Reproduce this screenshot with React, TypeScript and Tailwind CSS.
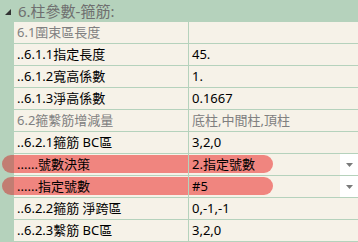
import React from "react";

type Row = { l: string; r: string; group?: boolean; pill?: boolean; drop?: boolean };

const rows: Row[] = [
  { l: "6.1圍束區長度", r: "", group: true },
  { l: "..6.1.1指定長度", r: "45." },
  { l: "..6.1.2寬高係數", r: "1." },
  { l: "..6.1.3淨高係數", r: "0.1667" },
  { l: "6.2箍繫筋增減量", r: "底柱,中間柱,頂柱", group: true },
  { l: "..6.2.1箍筋 BC區", r: "3,2,0" },
  { l: "......號數決策", r: "2.指定號數", pill: true, drop: true },
  { l: "......指定號數", r: "#5", pill: true, drop: true },
  { l: "..6.2.2箍筋 淨跨區", r: "0,-1,-1" },
  { l: "..6.2.3繫筋 BC區", r: "3,2,0" },
];

export default function App() {
  return (
    <div
      className="w-[358px] h-[242px] overflow-hidden bg-[#b5d2bc] text-[13px] leading-none"
      style={{ fontFamily: '"Noto Sans", "Noto Sans CJK TC", sans-serif' }}
    >
      <div className="flex h-[22px] items-center">
        <svg width="6" height="6" viewBox="0 0 6 6" className="ml-[5px] mt-[1px]">
          <polygon points="6,0 6,6 0,6" fill="#333333" />
        </svg>
        <span className="ml-[7px] text-[15px] text-[#6f6f6f]">6.柱參數-箍筋:</span>
      </div>
      <div className="pl-[14px]">
        {rows.map((row, i) => (
          <div key={i} className="relative flex h-[22px] border-b border-[#b5d2bc] bg-[#f6f2e8]">
            {row.pill && (
              <div className="absolute left-[-12px] top-[1px] h-[18px] w-[271px] rounded-full bg-[linear-gradient(to_right,#c27d72_12px,#f0857f_12px)]" />
            )}
            <div
              className={`relative flex w-[175px] shrink-0 items-center border-r border-[#b5d2bc] pl-[3px] ${
                row.group ? "text-[#808080]" : "text-black"
              }`}
            >
              {row.l}
            </div>
            <div
              className={`relative flex flex-1 items-center pl-[3px] ${
                row.group ? "text-[#808080]" : "text-black"
              }`}
            >
              {row.r}
            </div>
            {row.drop && (
              <div className="relative flex w-[18px] items-center justify-center bg-white">
                <svg width="7" height="4" viewBox="0 0 7 4">
                  <polygon points="0,0 7,0 3.5,4" fill="#7a7a7a" />
                </svg>
              </div>
            )}
          </div>
        ))}
      </div>
    </div>
  );
}
